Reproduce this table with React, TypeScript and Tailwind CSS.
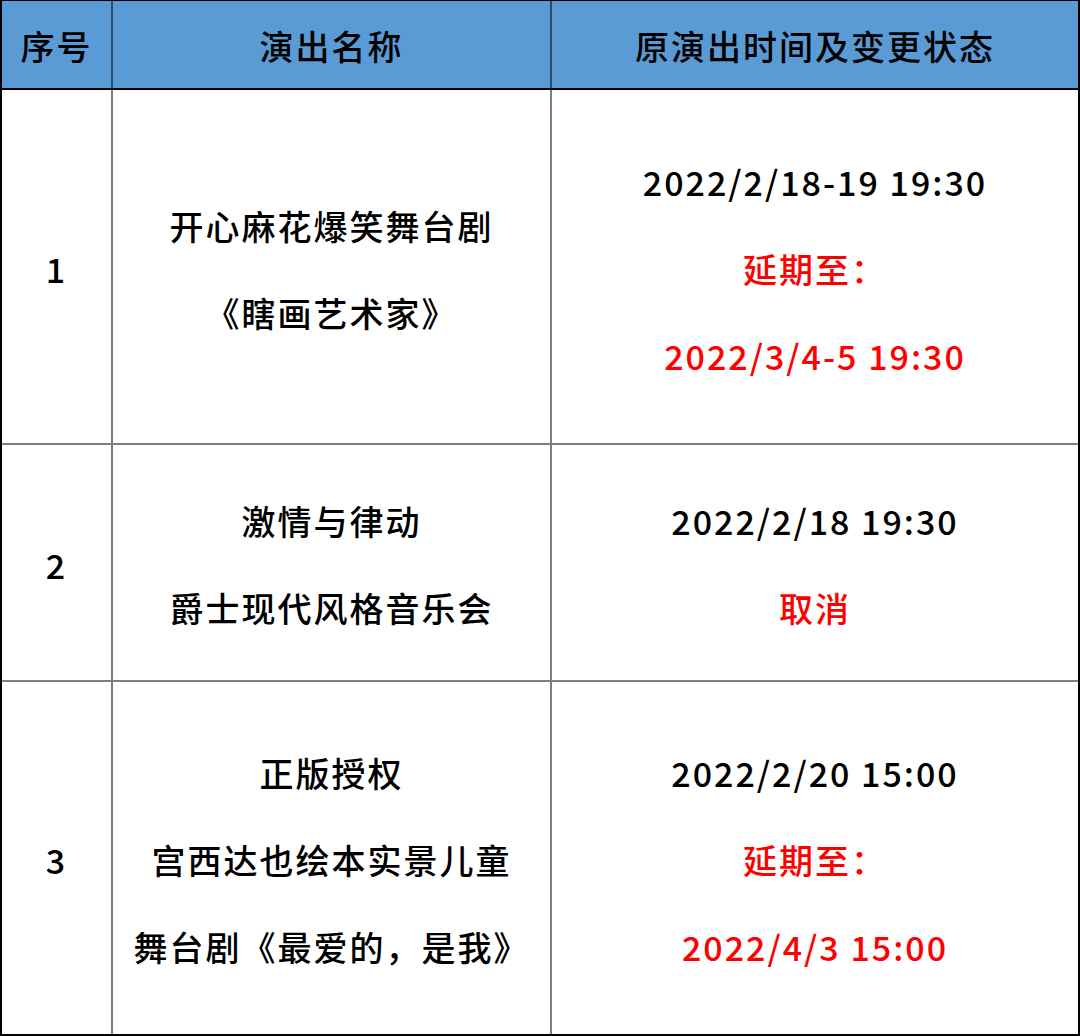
import React from "react";

const font = { fontFamily: '"Noto Sans CJK SC", "Noto Sans", sans-serif' };

function Lines({ lines }: { lines: { t: string; red?: boolean }[] }) {
  return (
    <div className="flex flex-col items-center">
      {lines.map((l, i) => (
        <div
          key={i}
          className={`leading-[87px] whitespace-pre ${l.red ? "text-[#ff0000]" : "text-black"}`}
        >
          {l.t}
        </div>
      ))}
    </div>
  );
}

type Row = {
  no: string;
  name: { t: string; red?: boolean }[];
  time: { t: string; red?: boolean }[];
  h: string;
  pt: string;
  last?: boolean;
};

const rows: Row[] = [
  {
    no: "1",
    name: [{ t: "开心麻花爆笑舞台剧" }, { t: "《瞎画艺术家》" }],
    time: [
      { t: "2022/2/18-19 19:30" },
      { t: "延期至：", red: true },
      { t: "2022/3/4-5 19:30", red: true },
    ],
    h: "h-[355px]",
    pt: "pt-[4px]",
  },
  {
    no: "2",
    name: [{ t: "激情与律动" }, { t: "爵士现代风格音乐会" }],
    time: [{ t: "2022/2/18 19:30" }, { t: "取消", red: true }],
    h: "h-[237px]",
    pt: "pt-[3px]",
  },
  {
    no: "3",
    name: [
      { t: "正版授权" },
      { t: "宫西达也绘本实景儿童" },
      { t: "舞台剧《最爱的，是我》" },
    ],
    time: [
      { t: "2022/2/20 15:00" },
      { t: "延期至：", red: true },
      { t: "2022/4/3 15:00", red: true },
    ],
    h: "h-[352px]",
    pt: "pt-[2px]",
    last: true,
  },
];

export default function App() {
  return (
    <div
      className="w-[1080px] h-[1036px] bg-white border-l-2 border-r-2 border-t border-b-2 border-black text-[34px] tracking-[2px] font-medium flex flex-col"
      style={font}
    >
      <div className="flex h-[89px] bg-[#5b9bd5] border-b-2 border-black">
        <div className="w-[111px] border-r-2 border-[#2e4a66] flex items-center justify-center pt-[2px]">
          序号
        </div>
        <div className="w-[439px] border-r-2 border-[#2e4a66] flex items-center justify-center pt-[2px]">
          演出名称
        </div>
        <div className="flex-1 flex items-center justify-center pt-[2px]">
          原演出时间及变更状态
        </div>
      </div>
      {rows.map((r) => (
        <div
          key={r.no}
          className={`flex ${r.h} ${r.last ? "" : "border-b-2 border-[#7f7f7f]"}`}
        >
          <div className={`w-[111px] border-r-2 border-[#7f7f7f] flex items-center justify-center ${r.pt}`}>
            {r.no}
          </div>
          <div className={`w-[439px] border-r-2 border-[#7f7f7f] flex items-center justify-center ${r.pt}`}>
            <Lines lines={r.name} />
          </div>
          <div className={`flex-1 flex items-center justify-center ${r.pt}`}>
            <Lines lines={r.time} />
          </div>
        </div>
      ))}
    </div>
  );
}
